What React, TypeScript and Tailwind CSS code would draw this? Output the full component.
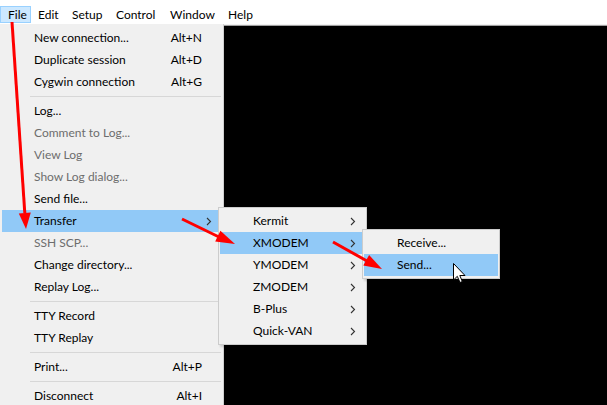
import React from "react";

const FONT = { fontFamily: "Lato, 'Segoe UI', 'Noto Sans', sans-serif" };

function Chevron() {
  return (
    <svg width="6" height="9" viewBox="0 0 6 9" className="block">
      <polyline points="1,1 4.5,4.5 1,8" fill="none" stroke="#333" strokeWidth="1.1" />
    </svg>
  );
}

type Item =
  | { sep: true }
  | { label: string; shortcut?: string; disabled?: boolean; sub?: boolean; active?: boolean };

const fileItems: Item[] = [
  { label: "New connection...", shortcut: "Alt+N" },
  { label: "Duplicate session", shortcut: "Alt+D" },
  { label: "Cygwin connection", shortcut: "Alt+G" },
  { sep: true },
  { label: "Log..." },
  { label: "Comment to Log...", disabled: true },
  { label: "View Log", disabled: true },
  { label: "Show Log dialog...", disabled: true },
  { label: "Send file..." },
  { label: "Transfer", sub: true, active: true },
  { label: "SSH SCP...", disabled: true },
  { label: "Change directory..." },
  { label: "Replay Log..." },
  { sep: true },
  { label: "TTY Record" },
  { label: "TTY Replay" },
  { sep: true },
  { label: "Print...", shortcut: "Alt+P" },
  { sep: true },
  { label: "Disconnect", shortcut: "Alt+I" },
];

function Row({ item, chevronRight }: { item: Item; chevronRight: number }) {
  if ("sep" in item) {
    return (
      <div className="h-[7px] flex items-center pl-[30px] pr-[2px]">
        <div className="h-px w-full bg-[#d7d7d7]" />
      </div>
    );
  }
  return (
    <div
      className={
        "relative h-[22px] mx-[2px] flex items-center pl-[32px] text-[12px] " +
        (item.active ? "bg-[#91c9f7] " : "") +
        (item.disabled ? "text-[#6d6d6d]" : "text-black")
      }
    >
      <span className="flex-1 whitespace-nowrap">{item.label}</span>
      {item.shortcut && <span className="whitespace-nowrap pr-[19px]">{item.shortcut}</span>}
      {item.sub && (
        <span className="absolute top-[7px]" style={{ right: chevronRight }}>
          <Chevron />
        </span>
      )}
    </div>
  );
}

export default function App() {
  const menubar = [
    { t: "File", w: 31 },
    { t: "Edit", w: 34 },
    { t: "Setup", w: 44 },
    { t: "Control", w: 54 },
    { t: "Window", w: 58 },
    { t: "Help", w: 40 },
  ];
  const xItems = ["Kermit", "XMODEM", "YMODEM", "ZMODEM", "B-Plus", "Quick-VAN"];
  return (
    <div className="relative w-[607px] h-[405px] overflow-hidden flex flex-col bg-white select-none" style={FONT}>
      {/* menubar */}
      <div className="h-[24px] bg-white flex items-end pb-[1px]">
        {menubar.map((m, i) => (
          <div
            key={m.t}
            className={
              "h-[17px] flex items-center pl-[7px] text-[12px] text-black " +
              (i === 0 ? "bg-[#cce8ff] border border-[#99d1ff] pl-[6px]" : "")
            }
            style={{ width: m.w }}
          >
            {m.t}
          </div>
        ))}
      </div>
      <div className="h-px bg-[#f0f0f0]" />
      <div className="h-px bg-[#a0a0a0]" />
      <div className="flex-1 bg-black" />

      {/* File menu */}
      <div className="absolute left-0 top-[24px] w-[224px] bg-[#f0f0f0] border-r border-[#cfcfcf] pt-[3px]">
        {fileItems.map((it, i) => (
          <Row key={i} item={it} chevronRight={9} />
        ))}
      </div>

      {/* Transfer submenu */}
      <div className="absolute left-[218px] top-[207px] w-[149px] bg-[#f0f0f0] border border-[#cccccc] py-[2px] shadow-[2px_2px_2px_rgba(0,0,0,0.15)]">
        {xItems.map((t) => (
          <div
            key={t}
            className={
              "relative h-[22px] mx-[1px] flex items-center pl-[33px] text-[12px] text-black " +
              (t === "XMODEM" ? "bg-[#91c9f7]" : "")
            }
          >
            {t}
            <span className="absolute right-[9px] top-[7px]">
              <Chevron />
            </span>
          </div>
        ))}
      </div>

      {/* XMODEM submenu */}
      <div className="absolute left-[362px] top-[229px] w-[138px] bg-[#f0f0f0] border border-[#cccccc] py-[2px] shadow-[2px_2px_2px_rgba(0,0,0,0.15)]">
        <div className="h-[22px] mx-[1px] flex items-center pl-[33px] text-[12px] text-black">Receive...</div>
        <div className="h-[22px] mx-[1px] flex items-center pl-[33px] text-[12px] text-black bg-[#91c9f7]">Send...</div>
      </div>

      {/* annotations */}
      <svg className="absolute inset-0 pointer-events-none" width="607" height="405" viewBox="0 0 607 405">
        <line x1="12" y1="22" x2="24.8" y2="213" stroke="#ff0000" strokeWidth="3" />
        <polygon points="26,229 30.8,212.6 18.8,213.4" fill="#ff0000" />
        <line x1="182" y1="219" x2="219" y2="237" stroke="#ff0000" strokeWidth="3" />
        <polygon points="235,244 215.2,241.6 220.4,230.8" fill="#ff0000" />
        <line x1="333" y1="242" x2="367" y2="261" stroke="#ff0000" strokeWidth="3" />
        <polygon points="382,269 363.3,265.5 369.1,255" fill="#ff0000" />
        {/* cursor */}
        <path
          d="M453.5 263.5 L453.5 280 L457.3 276.3 L460 282.5 L462.3 281.5 L459.8 275.5 L465 275.5 Z"
          fill="#ffffff"
          stroke="#000000"
          strokeWidth="1"
          strokeLinejoin="miter"
        />
      </svg>
    </div>
  );
}
